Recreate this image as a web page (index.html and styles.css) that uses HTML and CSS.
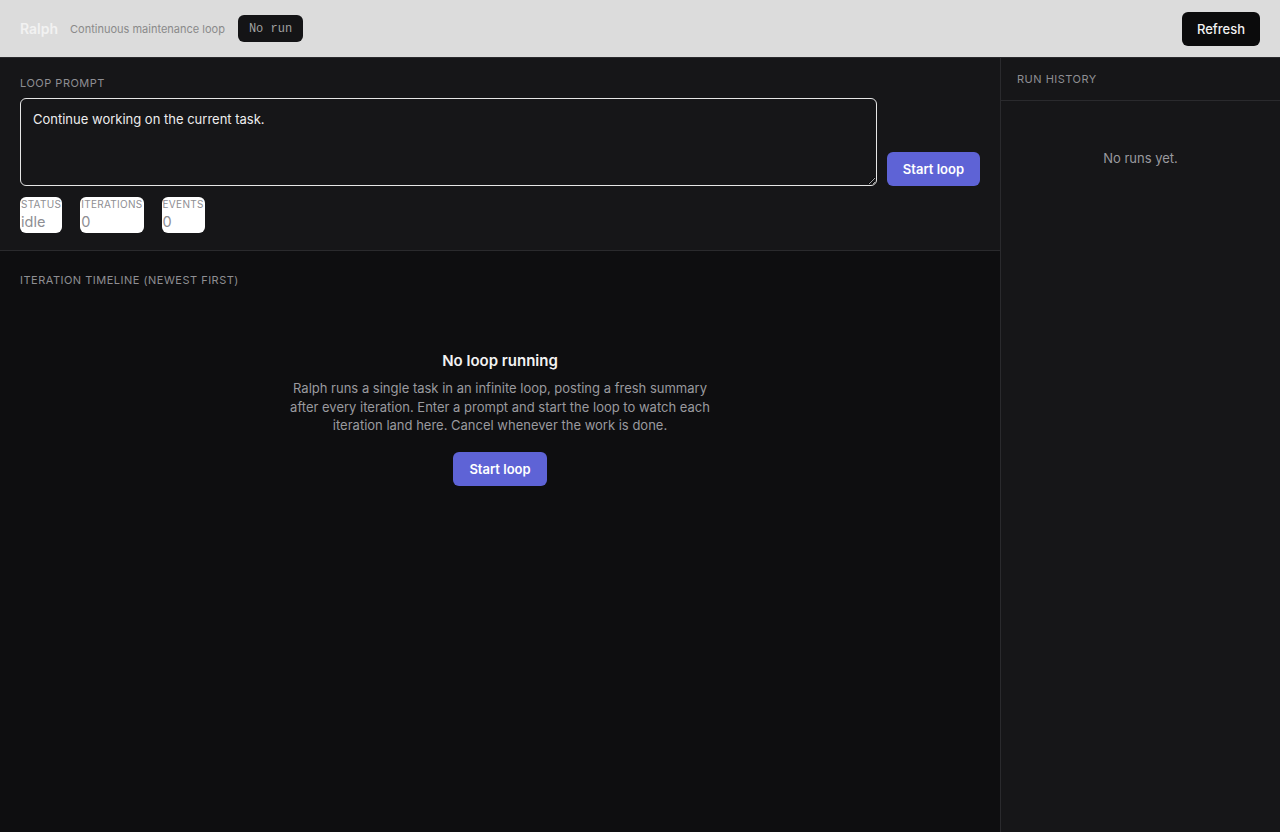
FILE: index.html
```html
<!DOCTYPE html>
<html lang="en">
<head>
  <meta charset="UTF-8">
  <meta name="viewport" content="width=device-width, initial-scale=1.0">
  <title>Ralph</title>
  <link rel="stylesheet" href="styles.css">
</head>
<body>
  <header class="topbar">
    <div class="brand">
      <span class="brand-name">Ralph</span>
      <span class="brand-sub">Continuous maintenance loop</span>
      <span class="run-badge">No run</span>
    </div>
    <button class="refresh-btn">Refresh</button>
  </header>

  <div class="layout">
    <main class="main">
      <section class="prompt-panel">
        <div class="section-label">Loop prompt</div>
        <div class="prompt-row">
          <textarea class="prompt-input">Continue working on the current task.</textarea>
          <button class="primary-btn">Start loop</button>
        </div>
        <div class="stats">
          <div class="stat"><div class="stat-label">Status</div><div class="stat-value">idle</div></div>
          <div class="stat"><div class="stat-label">Iterations</div><div class="stat-value">0</div></div>
          <div class="stat"><div class="stat-label">Events</div><div class="stat-value">0</div></div>
        </div>
      </section>

      <section class="timeline">
        <div class="section-label">Iteration timeline (newest first)</div>
        <div class="empty">
          <h3>No loop running</h3>
          <p>Ralph runs a single task in an infinite loop, posting a fresh summary after every iteration. Enter a prompt and start the loop to watch each iteration land here. Cancel whenever the work is done.</p>
          <button class="primary-btn">Start loop</button>
        </div>
      </section>
    </main>

    <aside class="sidebar">
      <div class="sidebar-head">Run history</div>
      <div class="sidebar-empty">No runs yet.</div>
    </aside>
  </div>
</body>
</html>
```

FILE: styles.css
```css
html, body {
  margin: 0;
  padding: 0;
  height: 100%;
  font-family: Inter, 'Noto Sans', sans-serif;
  background: #0e0e10;
  color: #ededed;
}

body {
  display: flex;
  flex-direction: column;
  overflow: hidden;
}

.topbar {
  height: 57px;
  flex: 0 0 auto;
  background: #dcdcdc;
  border-bottom: 1px solid #2a2a2d;
  display: flex;
  align-items: center;
  justify-content: space-between;
  padding: 0 20px;
}

.brand {
  display: flex;
  align-items: center;
  gap: 12px;
}

.brand-name {
  color: #f2f2f2;
  font-weight: 600;
  font-size: 14px;
}

.brand-sub {
  color: #8a8a8a;
  font-size: 11px;
}

.run-badge {
  margin-left: 1px;
  font-family: 'Liberation Mono', monospace;
  font-size: 12px;
  color: #a0a0a0;
  background: #141416;
  border-radius: 6px;
  padding: 7px 11px 6px;
}

.refresh-btn {
  background: #0b0b0c;
  color: #f2f2f2;
  border: none;
  border-radius: 6px;
  font-family: inherit;
  font-size: 13px;
  font-weight: 500;
  padding: 9px 15px;
  cursor: pointer;
}

.layout {
  flex: 1;
  display: flex;
  min-height: 0;
}

.main {
  width: 1000px;
  display: flex;
  flex-direction: column;
  border-right: 1px solid #2a2a2d;
}

.section-label {
  font-size: 11px;
  letter-spacing: 0.5px;
  text-transform: uppercase;
  color: #8e8e93;
}

.prompt-panel {
  background: #161618;
  border-bottom: 1px solid #2a2a2d;
  padding: 18px 20px 17px;
}

.prompt-row {
  display: flex;
  align-items: flex-end;
  gap: 10px;
  margin-top: 8px;
}

.prompt-input {
  flex: 1;
  height: 88px;
  box-sizing: border-box;
  background: #161618;
  border: 1px solid #e6e6e6;
  border-radius: 6px;
  color: #ededed;
  font-family: inherit;
  font-size: 13px;
  padding: 12px;
  resize: vertical;
}

.primary-btn {
  background: #5e63d6;
  color: #ffffff;
  border: none;
  border-radius: 6px;
  font-family: inherit;
  font-size: 13px;
  font-weight: 600;
  height: 34px;
  padding: 0 16px;
  cursor: pointer;
}

.stats {
  display: flex;
  gap: 18px;
  margin-top: 11px;
}

.stat {
  background: #ffffff;
  border-radius: 6px;
  height: 36px;
  box-sizing: border-box;
  padding: 1px 1px 0 1px;
}

.stat-label {
  font-size: 10px;
  letter-spacing: 0.3px;
  text-transform: uppercase;
  color: #8e8e93;
  line-height: 13px;
}

.stat-value {
  font-size: 14.5px;
  color: #8e8e93;
  line-height: 22px;
}

.timeline {
  flex: 1;
  background: #0e0e10;
  padding: 22px 20px;
}

.empty {
  display: flex;
  flex-direction: column;
  align-items: center;
  margin-top: 64px;
  text-align: center;
}

.empty h3 {
  margin: 0;
  font-size: 15px;
  font-weight: 600;
  color: #f2f2f2;
}

.empty p {
  width: 426px;
  margin: 9px 0 17px;
  font-size: 13px;
  line-height: 18.5px;
  color: #9a9a9f;
}

.sidebar {
  flex: 1;
  background: #161618;
}

.sidebar-head {
  height: 43px;
  box-sizing: border-box;
  padding: 14px 16px 0;
  border-bottom: 1px solid #2a2a2d;
  font-size: 11px;
  letter-spacing: 0.5px;
  text-transform: uppercase;
  color: #8e8e93;
}

.sidebar-empty {
  text-align: center;
  font-size: 13px;
  color: #9a9a9f;
  padding-top: 49px;
}
```
